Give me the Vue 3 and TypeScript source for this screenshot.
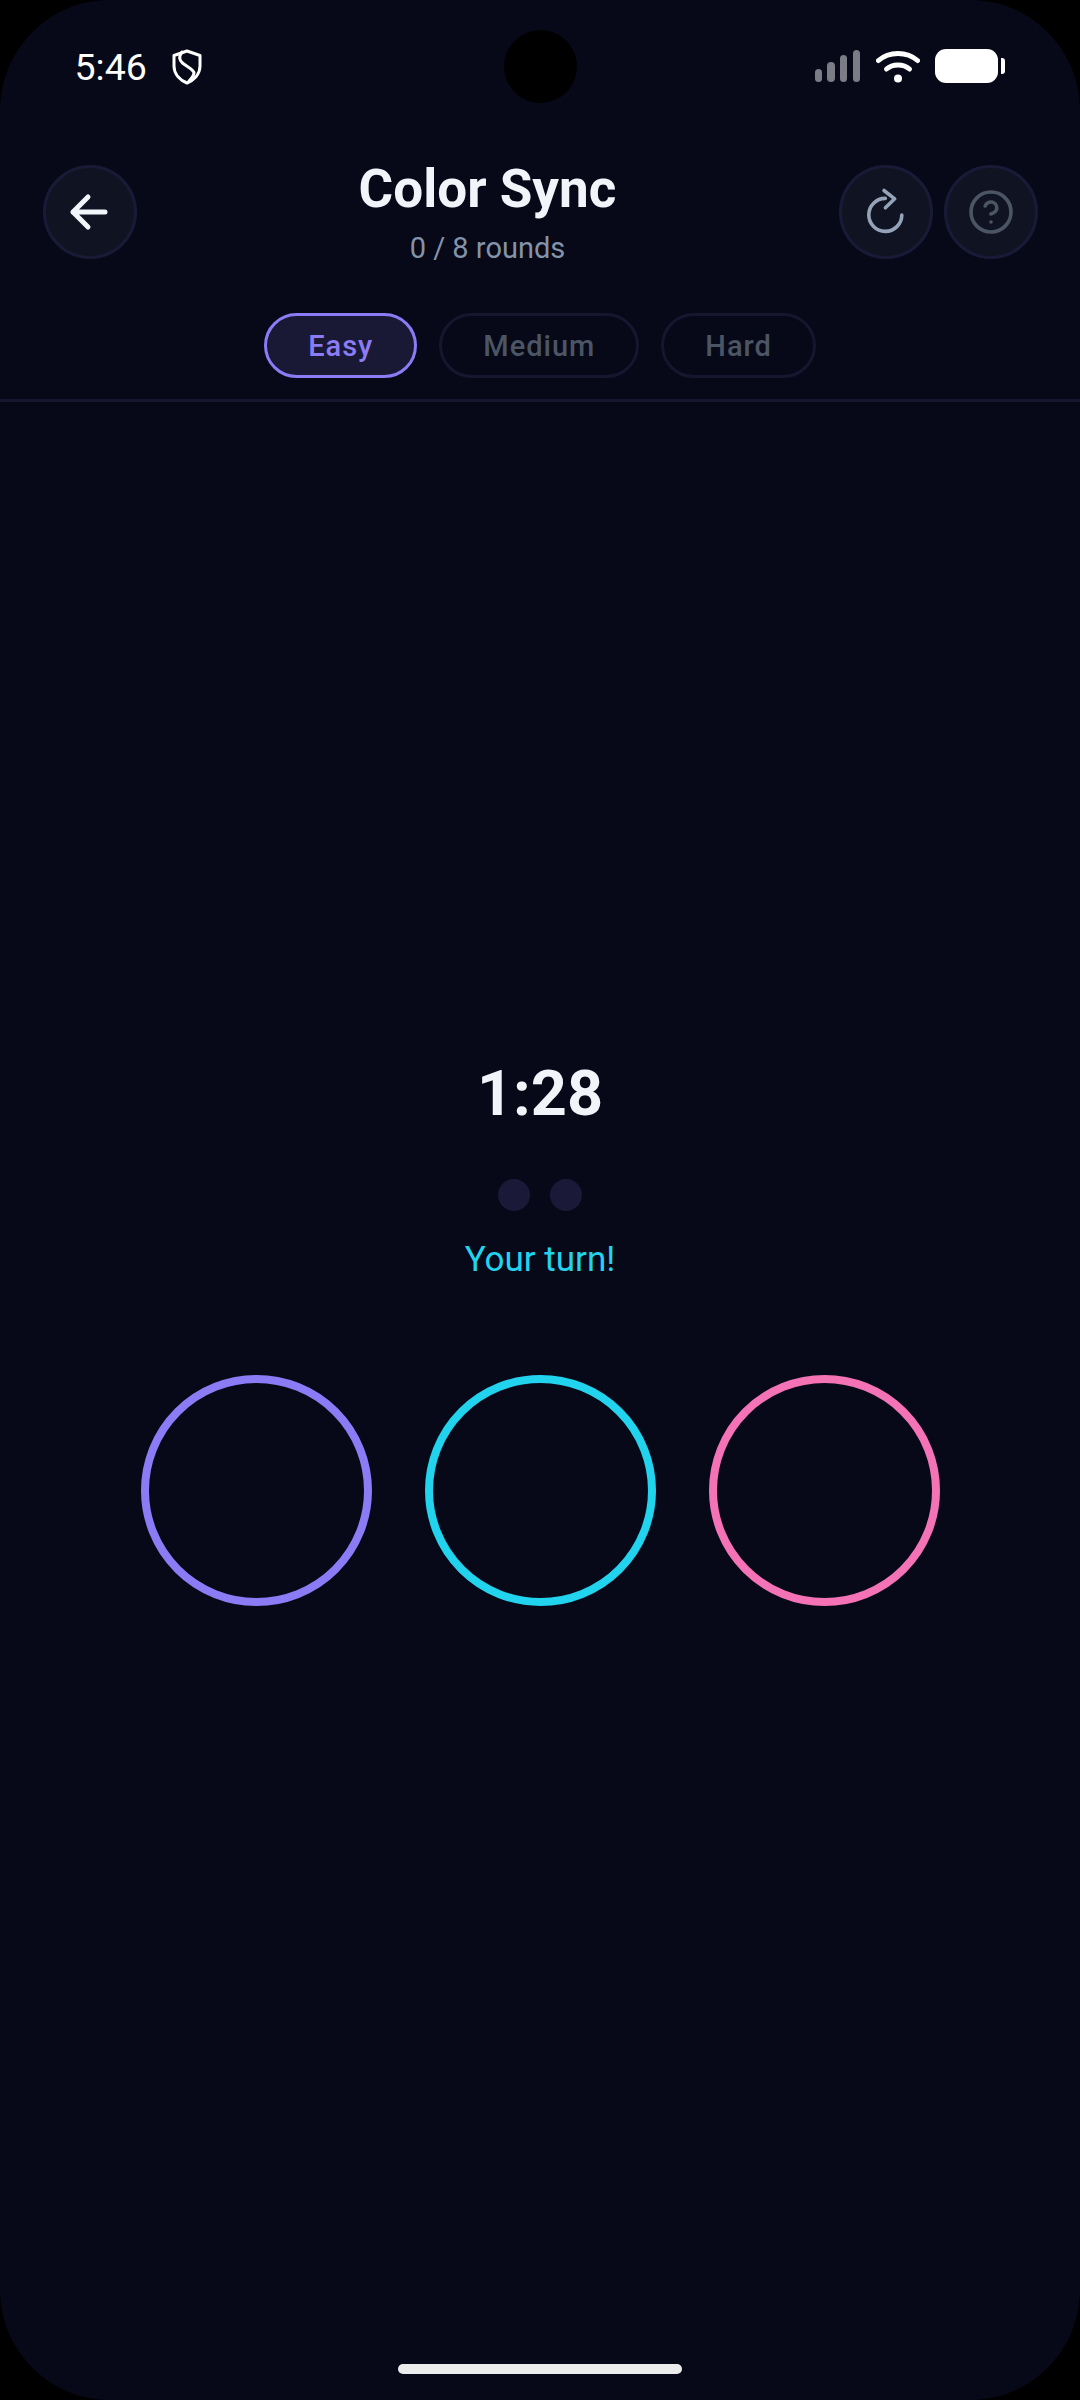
<script setup lang="ts">
const levels = [
  { label: 'Easy', active: true },
  { label: 'Medium', active: false },
  { label: 'Hard', active: false },
]
const pads = ['violet', 'cyan', 'pink']
const bars = [13, 20, 27, 32]
</script>

<template>
  <div class="screen">
    <div class="camera"></div>
    <div class="status">
      <div class="status-left">
        <span class="time">5:46</span>
        <svg class="shield" width="30" height="36" viewBox="0 0 30 36" fill="none" stroke="#fff" stroke-width="3" stroke-linejoin="round" stroke-linecap="round">
          <path d="M15 2 L28 6.5 V17 C28 26 21 31.5 15 34 C9 31.5 2 26 2 17 V6.5 Z" />
          <path d="M10 3 C7 7 7 11 10.5 14 C14 17 20 19.5 22 23.5 C22 26 20 29 17 32" />
        </svg>
      </div>
      <div class="status-right">
        <div class="signal">
          <span v-for="h in bars" :key="h" class="bar" :style="{ height: h + 'px' }"></span>
        </div>
        <svg class="wifi" width="44" height="33" viewBox="0 0 44 33" fill="none" stroke="#fff" stroke-width="5" stroke-linecap="round">
          <path d="M2.5 10.5 C13 1 31 1 41.5 10.5" />
          <path d="M10.5 19 C16.5 13.5 27.5 13.5 33.5 19" />
          <circle cx="22" cy="28.5" r="4" fill="#fff" stroke="none" />
        </svg>
        <div class="battery">
          <div class="battery-body"></div>
          <div class="battery-nub"></div>
        </div>
      </div>
    </div>

    <header class="header">
      <button class="round">
        <svg width="60" height="60" viewBox="0 0 60 60" fill="none" stroke="#f1f5f9" stroke-width="5" stroke-linecap="round" stroke-linejoin="round">
          <path d="M45 30 H13 M28 15 L13 30 L28 45" />
        </svg>
      </button>
      <div class="heading">
        <h1 class="title">Color Sync</h1>
        <p class="subtitle">0 / 8 rounds</p>
      </div>
      <div class="actions">
        <button class="round">
          <svg width="60" height="60" viewBox="0 0 60 60" fill="none" stroke="#94a3b8" stroke-width="3.6" stroke-linecap="round" stroke-linejoin="round">
            <path d="M45.8 33 A16.5 16.5 0 1 1 29.3 16.4" />
            <path d="M28 8.5 L38.7 16.8 L29.4 25.8" />
          </svg>
        </button>
        <button class="round">
          <svg width="48" height="48" viewBox="0 0 24 24" fill="none" stroke="#4b5563" stroke-width="1.8" stroke-linecap="round" stroke-linejoin="round">
            <circle cx="12" cy="12" r="10" />
            <path d="M9.09 9a3 3 0 0 1 5.83 1c0 2-3 3-3 3" />
            <path d="M12 17h.01" />
          </svg>
        </button>
      </div>
    </header>

    <nav class="levels">
      <span v-for="l in levels" :key="l.label" class="pill" :class="{ active: l.active }">{{ l.label }}</span>
    </nav>

    <main class="game">
      <div class="timer">1:28</div>
      <div class="dots"><span class="dot"></span><span class="dot"></span></div>
      <div class="turn">Your turn!</div>
      <div class="pads">
        <div v-for="p in pads" :key="p" class="pad" :class="p"></div>
      </div>
    </main>

    <div class="home-wrap"><div class="home"></div></div>
  </div>
</template>

<style>
html, body { margin: 0; background: #000; }
</style>

<style scoped>
.screen {
  position: relative;
  width: 1080px;
  height: 2400px;
  background: #070919;
  border-radius: 110px;
  overflow: hidden;
  display: flex;
  flex-direction: column;
  font-family: Roboto, "Noto Sans", sans-serif;
}
.camera {
  position: absolute;
  left: 503.5px;
  top: 29.5px;
  width: 73px;
  height: 73px;
  border-radius: 50%;
  background: #000;
}
.status {
  height: 156px;
  box-sizing: border-box;
  padding: 49px 75px 0 74.5px;
  display: flex;
  justify-content: space-between;
  align-items: flex-start;
}
.status-left { display: flex; align-items: center; gap: 25px; height: 36px; }
.time { font-size: 37.5px; color: #fff; line-height: 36px; }
.status-right { display: flex; align-items: flex-end; height: 34px; }
.signal { display: flex; align-items: flex-end; gap: 5.2px; margin-right: 16px; margin-bottom: 1px; }
.bar { width: 7.4px; border-radius: 4px; background: #7c7c86; }
.wifi { margin-right: 15px; margin-bottom: 0; }
.battery { display: flex; align-items: center; gap: 3px; }
.battery-body { width: 63px; height: 34px; border-radius: 11px; background: #fff; }
.battery-nub { width: 4px; height: 16px; border-radius: 0 3px 3px 0; background: #fff; }

.header {
  display: flex;
  align-items: flex-start;
  padding: 0 42.5px;
}
.round {
  flex: none;
  box-sizing: border-box;
  width: 94px;
  height: 94px;
  margin-top: 9px;
  padding: 0;
  border-radius: 50%;
  border: 3px solid #1a1a36;
  background: #101322;
  display: flex;
  align-items: center;
  justify-content: center;
}
.heading { flex: 1; text-align: center; }
.title {
  margin: 1px 0 0;
  font-size: 53px;
  line-height: 65px;
  font-weight: 700;
  color: #f1f5f9;
}
.subtitle {
  margin: 8px 0 0;
  font-size: 29px;
  line-height: 36px;
  color: #8493a8;
}
.actions { display: flex; gap: 11px; }

.levels {
  display: flex;
  justify-content: center;
  gap: 22px;
  margin-top: 47px;
  padding-bottom: 21px;
  border-bottom: 3px solid #16162f;
}
.pill {
  box-sizing: border-box;
  height: 65px;
  padding: 0 41px;
  border: 3px solid #16162f;
  border-radius: 33px;
  display: flex;
  align-items: center;
  font-size: 29px;
  font-weight: 500;
  letter-spacing: 1px;
  color: #4b5563;
}
.pill.active {
  background: #191935;
  border-color: #8b7cf6;
  color: #8b7cf6;
}

.game {
  flex: 1;
  display: flex;
  flex-direction: column;
  align-items: center;
  justify-content: center;
  padding-bottom: 106px;
}
.timer {
  font-size: 63px;
  line-height: 78px;
  font-weight: 700;
  color: #f1f5f9;
}
.dots { display: flex; gap: 20px; margin-top: 46px; }
.dot { width: 32px; height: 32px; border-radius: 50%; background: #1a1a38; }
.turn {
  margin-top: 27px;
  font-size: 35px;
  line-height: 44px;
  color: #22d3ee;
}
.pads { display: flex; gap: 53px; margin-top: 93px; }
.pad {
  box-sizing: border-box;
  width: 231px;
  height: 231px;
  border-radius: 50%;
  border: 8px solid;
}
.pad.violet { border-color: #8b7cf6; }
.pad.cyan { border-color: #22d3ee; }
.pad.pink { border-color: #f472b6; }

.home-wrap { height: 36px; display: flex; justify-content: center; flex: none; }
.home { width: 284px; height: 10px; border-radius: 5px; background: #ececec; }
</style>
